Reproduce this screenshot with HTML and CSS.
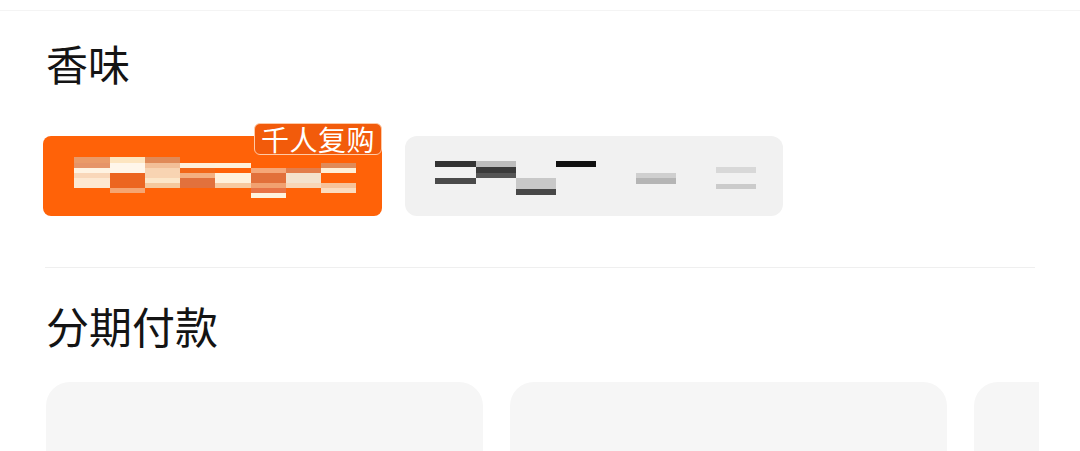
FILE: index.html
```html
<!DOCTYPE html>
<html lang="zh">
<head>
<meta charset="utf-8">
<link rel="stylesheet" href="styles.css">
</head>
<body>
<div class="topbar"></div>
<main class="page">
  <section class="section">
    <h2 class="title">香味</h2>
    <div class="options">
      <div class="option option-active">
        <span class="badge">千人复购</span>
        <svg class="mosaic" width="339" height="80" viewBox="0 0 339 80">
          <g transform="translate(-43 -136)">
            <rect x="74" y="157" width="36" height="6" fill="#ea9a68"/>
            <rect x="74" y="163" width="36" height="5" fill="#e69468"/>
            <rect x="74" y="168" width="36" height="5" fill="#fff3e2"/>
            <rect x="74" y="173" width="36" height="5" fill="#f9d7b9"/>
            <rect x="74" y="178" width="36" height="10" fill="#fde8d1"/>

            <rect x="110" y="157" width="35" height="6" fill="#fde5c0"/>
            <rect x="110" y="163" width="35" height="10" fill="#fff6ea"/>
            <rect x="110" y="173" width="35" height="15" fill="#ec6520"/>
            <rect x="110" y="188" width="35" height="5" fill="#f5a572"/>

            <rect x="145" y="157" width="35" height="6" fill="#e08a58"/>
            <rect x="145" y="163" width="35" height="5" fill="#f2bf98"/>
            <rect x="145" y="168" width="35" height="10" fill="#f8d4b2"/>
            <rect x="145" y="178" width="35" height="5" fill="#fce6c8"/>
            <rect x="145" y="183" width="35" height="5" fill="#f5c89c"/>

            <rect x="180" y="163" width="35" height="5" fill="#fff0da"/>
            <rect x="180" y="168" width="35" height="5" fill="#f26818"/>
            <rect x="180" y="173" width="35" height="5" fill="#f4b080"/>
            <rect x="180" y="178" width="35" height="10" fill="#e2713c"/>

            <rect x="215" y="163" width="36" height="5" fill="#fff1db"/>
            <rect x="215" y="173" width="36" height="10" fill="#fff1dc"/>
            <rect x="215" y="183" width="36" height="5" fill="#f7c9a0"/>

            <rect x="251" y="168" width="35" height="5" fill="#f5a778"/>
            <rect x="251" y="173" width="35" height="10" fill="#e2703a"/>
            <rect x="251" y="183" width="35" height="5" fill="#f1a170"/>
            <rect x="251" y="188" width="35" height="5" fill="#e87345"/>
            <rect x="251" y="193" width="35" height="5" fill="#fff3de"/>

            <rect x="286" y="168" width="35" height="5" fill="#e27d4a"/>
            <rect x="286" y="173" width="35" height="10" fill="#f4e2cc"/>
            <rect x="286" y="183" width="35" height="5" fill="#f8d6b6"/>

            <rect x="321" y="163" width="35" height="5" fill="#e08a58"/>
            <rect x="321" y="168" width="35" height="5" fill="#fff0d8"/>
            <rect x="321" y="183" width="35" height="5" fill="#f6c39a"/>
            <rect x="321" y="188" width="35" height="5" fill="#fbdcbf"/>
          </g>
        </svg>
      </div>
      <div class="option">
        <svg class="mosaic" width="378" height="80" viewBox="0 0 378 80">
          <g transform="translate(-405 -136)">
            <rect x="435" y="161" width="41" height="6" fill="#333333"/>
            <rect x="435" y="178" width="41" height="6" fill="#4a4a4a"/>

            <rect x="476" y="161" width="40" height="6" fill="#bdbdbd"/>
            <rect x="476" y="167" width="40" height="6" fill="#3a3a3a"/>
            <rect x="476" y="173" width="40" height="5" fill="#555555"/>

            <rect x="516" y="178" width="40" height="11" fill="#c8c8c8"/>
            <rect x="516" y="189" width="40" height="6" fill="#484848"/>

            <rect x="556" y="161" width="40" height="6" fill="#111111"/>

            <rect x="636" y="173" width="40" height="5" fill="#cfcfcf"/>
            <rect x="636" y="178" width="40" height="6" fill="#b5b5b5"/>

            <rect x="716" y="167" width="40" height="6" fill="#d8d8d8"/>
            <rect x="716" y="184" width="40" height="5" fill="#cbcbcb"/>
          </g>
        </svg>
      </div>
    </div>
  </section>
  <hr class="divider">
  <section class="section">
    <h2 class="title title-second">分期付款</h2>
    <div class="cards">
      <div class="card"></div>
      <div class="card"></div>
      <div class="card"></div>
    </div>
  </section>
</main>
</body>
</html>
```

FILE: styles.css
```css
html, body {
  margin: 0;
  padding: 0;
  background: #ffffff;
  font-family: "Noto Sans CJK SC", "Noto Sans", sans-serif;
  overflow: hidden;
  height: 451px;
}

.topbar {
  height: 10px;
  border-bottom: 1px solid #f4f4f4;
}

.page {
  padding: 0 45px 0 43px;
}

.title {
  margin: 0;
  font-size: 42px;
  line-height: 48px;
  font-weight: 400;
  color: #141414;
  padding-left: 3px;
}

.section:first-child .title {
  margin-top: 28px;
}

.options {
  display: flex;
  gap: 23px;
  margin-top: 49px;
}

.option {
  position: relative;
  height: 80px;
  border-radius: 12px;
  background: #f1f1f1;
}

.option-active {
  background: #ff6208;
  border-radius: 8px;
}

.mosaic {
  display: block;
}

.badge {
  position: absolute;
  top: -13px;
  right: 0;
  height: 30px;
  padding: 0 6px;
  border: 1px solid #ffcaa6;
  border-radius: 6px;
  background: #f25b0b;
  color: #ffffff;
  font-size: 28px;
  letter-spacing: 0.5px;
  line-height: 30px;
  white-space: nowrap;
}

.divider {
  margin: 51px 0 0 2px;
  border: 0;
  border-top: 1px solid #efefef;
  height: 0;
}

.title-second {
  margin-top: 33px;
  font-size: 43px;
}

.cards {
  display: flex;
  gap: 27px;
  margin-top: 33px;
  margin-left: 3px;
  margin-right: -4px;
  overflow: hidden;
}

.card {
  flex: 0 0 437px;
  height: 120px;
  border-radius: 24px;
  background: #f6f6f6;
}
```
